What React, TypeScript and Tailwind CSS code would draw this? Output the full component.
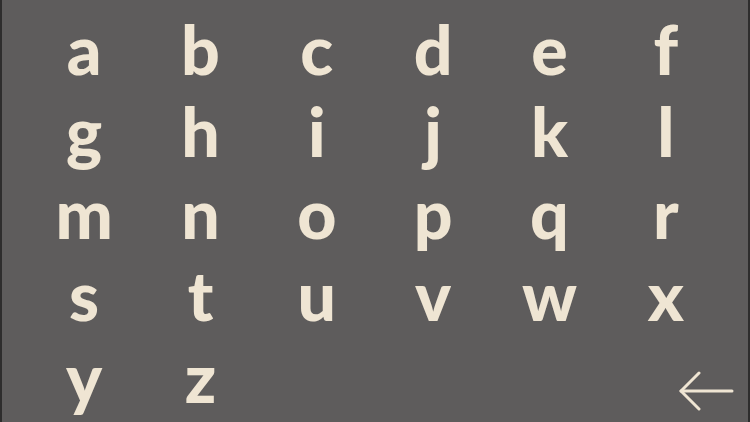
const letters = "abcdefghijklmnopqrstuvwxyz".split("");

function BackArrow() {
  return (
    <svg width="55" height="40" viewBox="0 0 55 40" fill="none" stroke="#efe5d3" strokeWidth="3" strokeLinecap="round" strokeLinejoin="round">
      <path d="M20 2 L2 20 L20 38" />
      <path d="M2 20 L53 20" />
    </svg>
  );
}

export default function App() {
  return (
    <div className="h-[422px] w-[750px] overflow-hidden border-x-2 border-[#2e2d2d] bg-[#5e5c5c]">
      <div className="grid grid-cols-6 px-[24px] pt-[8px]">
        {letters.map((l) => (
          <div
            key={l}
            className="flex h-[82px] items-start justify-center text-[68px] font-black leading-[82px] text-[#efe5d3]"
            style={{ fontFamily: "Lato, 'Noto Sans', sans-serif" }}
          >
            {l}
          </div>
        ))}
        <div className="col-start-6 flex h-[82px] items-start justify-end -mr-[10px] pt-[35px]">
          <BackArrow />
        </div>
      </div>
    </div>
  );
}
